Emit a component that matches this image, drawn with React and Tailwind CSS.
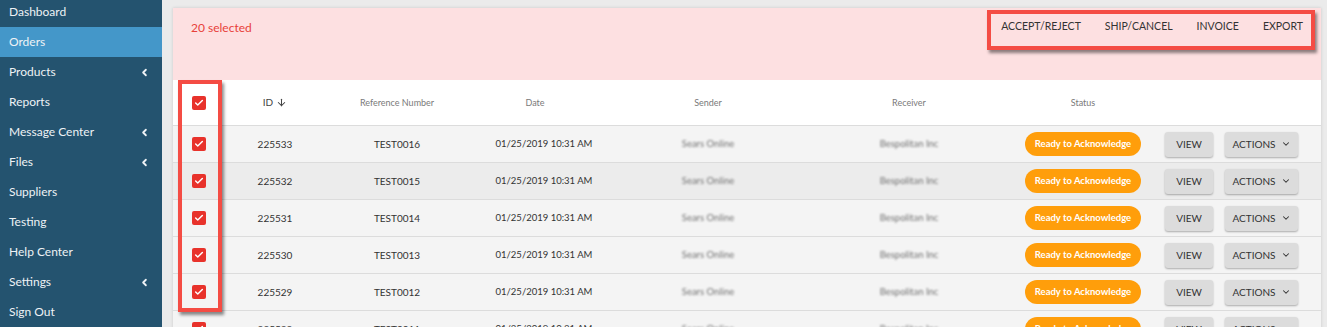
import { ArrowDown, Check, ChevronDown, ChevronLeft } from 'lucide-react'

const navItems = [
  { label: 'Dashboard' },
  { label: 'Orders', active: true },
  { label: 'Products', sub: true },
  { label: 'Reports' },
  { label: 'Message Center', sub: true },
  { label: 'Files', sub: true },
  { label: 'Suppliers' },
  { label: 'Testing' },
  { label: 'Help Center' },
  { label: 'Settings', sub: true },
  { label: 'Sign Out' },
]

const rows = [
  { id: '225533', ref: 'TEST0016' },
  { id: '225532', ref: 'TEST0015', hover: true },
  { id: '225531', ref: 'TEST0014' },
  { id: '225530', ref: 'TEST0013' },
  { id: '225529', ref: 'TEST0012' },
  { id: '225528', ref: 'TEST0011' },
]

const cols =
  'grid grid-cols-[52px_100px_144px_132px_214px_188px_160px_1fr] items-center'

function CheckBox() {
  return (
    <span className="flex h-[14px] w-[14px] items-center justify-center rounded-[2px] bg-[#e8322b] text-white">
      <Check size={10} strokeWidth={3.5} />
    </span>
  )
}

function Sidebar() {
  return (
    <aside className="w-[162px] shrink-0 bg-[#24536f] text-[12px] text-[#eef2f5]">
      <nav className="-mt-[3px]">
        {navItems.map((item) => (
          <div
            key={item.label}
            className={
              'flex h-[30px] items-center justify-between pl-[9px] pr-[12px] ' +
              (item.active ? 'bg-[#4497c9]' : '')
            }
          >
            <span>{item.label}</span>
            {item.sub && <ChevronLeft size={11} strokeWidth={4} />}
          </div>
        ))}
      </nav>
    </aside>
  )
}

function Row({ row }) {
  return (
    <div
      className={
        cols +
        ' h-[37px] border-b border-[#dcdcdc] text-[10px] text-[#333] ' +
        (row.hover ? 'bg-[#ececec]' : 'bg-[#f4f4f4]')
      }
    >
      <div className="flex justify-center">
        <CheckBox />
      </div>
      <div className="text-center">{row.id}</div>
      <div className="text-center">{row.ref}</div>
      <div className="whitespace-nowrap pl-[18px] text-center text-[9.5px]">01/25/2019 10:31 AM</div>
      <div className="text-center text-[9.5px] text-[#707070] blur-[1.2px]">Sears Online</div>
      <div className="text-center text-[9.5px] text-[#707070] blur-[1.2px]">Bespolitan Inc</div>
      <div className="flex justify-center">
        <span className="flex h-[24px] w-[116px] items-center justify-center rounded-full bg-[#ff9e0b] text-[9.5px] font-bold text-white">
          Ready to Acknowledge
        </span>
      </div>
      <div className="flex items-center gap-[12px] pl-[2px]">
        <button className="h-[25px] w-[48px] rounded-[3px] bg-[#dcdcdc] text-[10px] text-[#333] shadow-[0_1px_2px_rgba(0,0,0,0.3)]">
          VIEW
        </button>
        <button className="flex h-[25px] w-[73px] items-center justify-center gap-[5px] rounded-[3px] bg-[#dcdcdc] text-[10px] text-[#333] shadow-[0_1px_2px_rgba(0,0,0,0.3)]">
          ACTIONS
          <ChevronDown size={10} strokeWidth={2.5} />
        </button>
      </div>
    </div>
  )
}

export default function App() {
  return (
    <div className="flex h-[327px] w-[1327px] overflow-hidden bg-[#ebebeb] font-['Lato','Noto_Sans',sans-serif]">
      <Sidebar />
      <main className="flex-1 pl-[11px] pr-[6px] pt-[8px]">
        <div className="relative bg-[#f4f4f4] shadow-[0_0_3px_rgba(0,0,0,0.15)]">
          <div className="flex h-[72px] items-start justify-between bg-[#fde0e1] pl-[18px] pr-[6px]">
            <span className="mt-[11px] text-[12px] text-[#e8403a]">20 selected</span>
            <div className="mt-[2px] flex h-[40px] items-start gap-[24px] border-[4px] border-[#f44c44] pl-[10px] pr-[8px] pt-[5px] text-[10.5px] text-[#333] shadow-[2px_3px_3px_rgba(0,0,0,0.45)]">
              <span>ACCEPT/REJECT</span>
              <span>SHIP/CANCEL</span>
              <span>INVOICE</span>
              <span>EXPORT</span>
            </div>
          </div>

          <div className={cols + ' h-[46px] border-b border-[#dcdcdc] bg-white text-[9px] text-[#7a7a7a]'}>
            <div className="flex justify-center">
              <CheckBox />
            </div>
            <div className="flex items-center justify-center gap-[3px] text-[10px] text-[#444]">
              ID <ArrowDown size={11} strokeWidth={2.2} />
            </div>
            <div className="text-center">Reference Number</div>
            <div className="text-center">Date</div>
            <div className="text-center">Sender</div>
            <div className="text-center">Receiver</div>
            <div className="text-center">Status</div>
            <div />
          </div>

          {rows.map((row) => (
            <Row key={row.id} row={row} />
          ))}

          <div className="absolute left-[5px] top-[72px] h-[232px] w-[44px] border-[4px] border-[#f44c44] shadow-[2px_3px_3px_rgba(0,0,0,0.45)]" />
        </div>
      </main>
    </div>
  )
}
